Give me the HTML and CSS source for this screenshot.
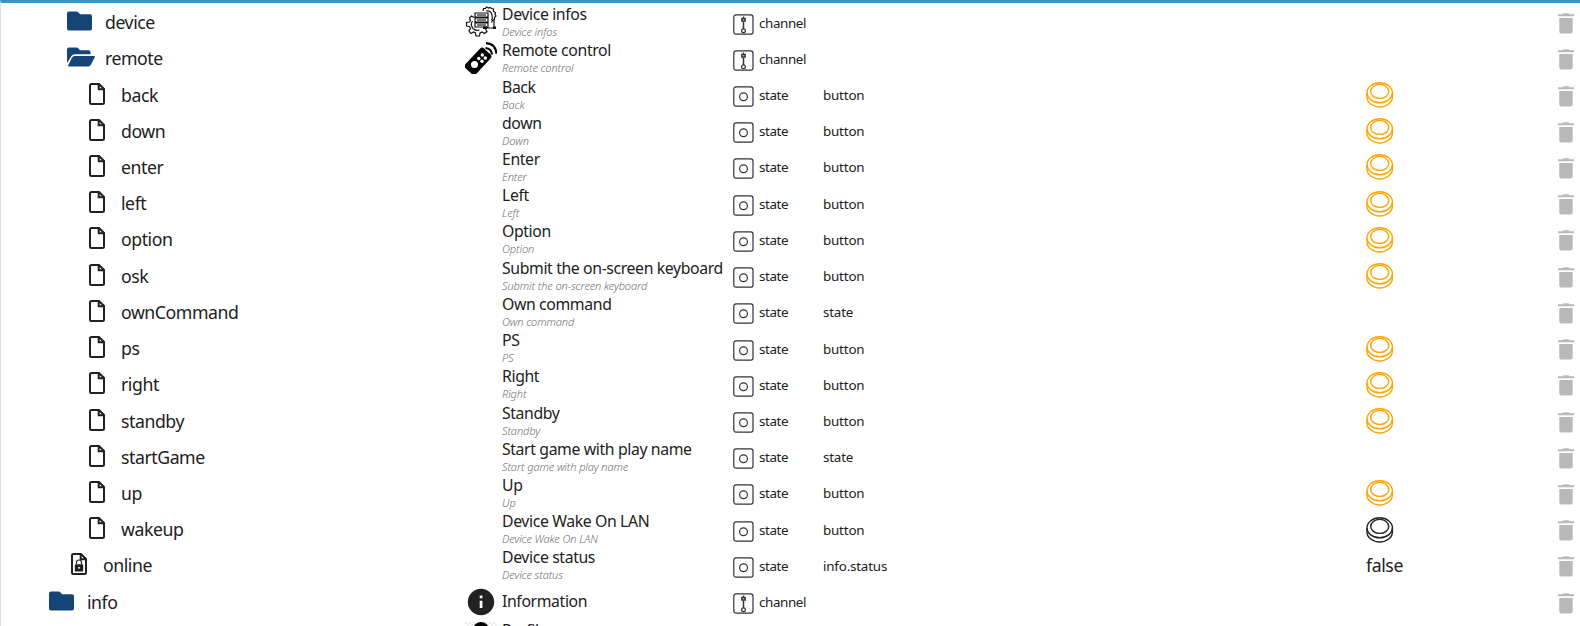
FILE: index.html
```html
<!DOCTYPE html>
<html lang="en">
<head>
<meta charset="utf-8">
<title>Objects</title>
<link rel="stylesheet" href="styles.css">
</head>
<body>
<svg class="defs" aria-hidden="true">
  <symbol id="folder" viewBox="0 0 28 20"><path d="M2 .5h7.5q1 0 1.700.7L12.700 2.700q.5.500 1.300.500h9q2 0 2 2V17.500q0 2-2 2H2q-2 0-2-2v-15q0-2 2-2z"/></symbol>
  <symbol id="open" viewBox="0 0 28 20"><path d="M0 16V2.500Q0 .5 2 .5h7.500q1 0 1.700.7l1.500 1.500q.5.500 1.300.500h7.500q2 0 2 2v2H7.500q-2 0-3 1.700z"/><path d="M7.500 9H27q1.400 0 .8 1.300L24 17.500q-1 2-2.800 2H2q-1.400 0-.8-1.300L5 10.500Q5.800 9 7.500 9z"/></symbol>
  <symbol id="file" viewBox="0 0 18 24"><path d="M3 2h8l5 5v13.500q0 1.500-1.500 1.500h-11Q2 22 2 20.500v-17Q2 2 3.500 2M10.700 2v5.300H16" fill="none" stroke="currentColor" stroke-width="2"/></symbol>
  <symbol id="lock" viewBox="0 0 18 24"><use href="#file"/><path d="M6.500 12v-1.500a2.500 2.500 0 0 1 5 0V12" fill="none" stroke="currentColor" stroke-width="1.200"/><path fill-rule="evenodd" d="M5.500 12.200h7q.7 0 .7.700v6q0 .7-.7.700h-7q-.7 0-.7-.7v-6q0-.7.7-.7zM9 14.900a.9.900 0 1 0 .01 0z"/></symbol>
  <symbol id="channel" viewBox="0 0 21 21"><g fill="none" stroke="currentColor" stroke-width="1.200"><rect x=".8" y=".8" width="19.200" height="19.400" rx="2.200"/><circle cx="10.500" cy="16.800" r="1.900"/><path d="M10.500 2.500v2M10.500 7.500v7.500" stroke-width="1.500"/><rect x="8.900" y="4.600" width="3.200" height="2.400" stroke-width="1.500"/></g></symbol>
  <symbol id="state" viewBox="0 0 21 21"><g fill="none" stroke="currentColor" stroke-width="1.200"><rect x=".8" y=".8" width="19.200" height="19.400" rx="2.200"/><circle cx="10.500" cy="10.700" r="3.900"/></g></symbol>
  <symbol id="press" viewBox="0 0 28 26"><g fill="none" stroke="currentColor" stroke-width="1.400"><ellipse cx="13.700" cy="10.800" rx="12.700" ry="10"/><ellipse cx="13.700" cy="9.400" rx="9" ry="7"/><path d="M1 11v4c0 5.500 5.700 10 12.700 10s12.700-4.500 12.700-10v-4"/></g></symbol>
  <symbol id="trash" viewBox="0 0 16 21"><path d="M0 1.300h4.500L5.500.3h5l1 1H16v2H0zM1.300 5h13.400v13.500q0 2-2 2H3.300q-2 0-2-2z"/></symbol>
  <symbol id="info" viewBox="0 0 32 32"><circle cx="16" cy="16" r="13.200"/><path d="M14.700 14.700h2.700v7.300h-2.700zM14.700 9.500h2.700v2.700h-2.700z" fill="#fff"/></symbol>
  <symbol id="gears" viewBox="0 0 32 32"><g fill="none" stroke="#111" stroke-width="1.200"><path d="M9 11.500 6.500 10 4.500 12l1 2.500-1 1.500-3 .5v3.500l3 .5 1 2-1.500 2.500 2 2.500 2.500-1.500 2 1 .5 3h3.500l.5-3 2-1 2.500 1.500 2.500-2-1.500-2.500M7.500 15a6 6 0 0 0 7 9M18 5l.5-2.500h2l1-1.500 2 1 1.500-.5 1.500 1 2 .5v2.500l2 1-.5 2 1 1.500-1.500 1.500v2l-2 1-1 2"/><path d="M21 5q5-1 6 4t-1 5M10 7h13v4H10zM10 12h13v4H10zM10 17h13v4H10zM20 22h9V13"/></g><g fill="#777"><path d="M12 8h9v2h-9zM12 13h9v2h-9zM12 18h9v2h-9z"/></g><path d="M18 20.500h4v2.500h-4zM28 20.500h3v2.500h-3z" fill="#111"/></symbol>
  <symbol id="remote" viewBox="0 0 32 32"><rect x="5.500" y="5.500" width="14.500" height="27" rx="3" transform="rotate(43 12.500 19.500)" fill="#000"/><g fill="#fff"><circle cx="9.500" cy="22.500" r="3.500"/><circle cx="13.800" cy="16.500" r="1.700"/><circle cx="17.300" cy="13" r="1.700"/><circle cx="17" cy="19.300" r="1.700"/><circle cx="20.300" cy="16" r="1.700"/></g><path d="M20.500 6q6 .5 6.500 6.500M21 1.200q9.500.5 10.500 10.500" fill="none" stroke="#000" stroke-width="2.200"/></symbol>
  <symbol id="person" viewBox="0 0 32 32"><path d="M0 .5h32M2 2.500h32" stroke="#e8e8e8" stroke-width="2" stroke-dasharray="2 2"/><circle cx="16" cy="8" r="8" fill="#000"/><path d="M3 30q0-12 13-12t13 12z" fill="#000"/></symbol>
</svg>
<main class="tree" id="tree"></main>
<script src="tree.js"></script>
</body>
</html>
```
FILE: styles.css
```css
body {
  margin: 0;
  height: 626px;
  overflow: hidden;
  background: #fff;
  color: #212121;
  font-family: "Noto Sans", "Open Sans", sans-serif;
}
.defs { display: none; }
svg { fill: currentColor; flex: none; display: block; }
.tree {
  box-sizing: border-box;
  height: 626px;
  overflow: hidden;
  border-top: 3px solid #3399cc;
  border-left: 1px solid #e0e0e0;
  padding-top: 1px;
}
.row {
  display: grid;
  grid-template-columns: 464px 268px 90px 543px 1fr 22px;
  height: 36.22px;
  align-items: center;
}
.id { display: flex; align-items: center; font-size: 17.7px; line-height: 24px; letter-spacing: -.45px; }
.level-1 { padding-left: 48px; }
.level-2 { padding-left: 66px; }
.level-3 { padding-left: 87px; }
.leaf-2 { padding-left: 69px; }
.id-text { padding-top: 0; }
.folder { width: 28px; height: 20px; color: #164477; margin: 0 10px 2px 0; }
.file { width: 18px; height: 24px; margin: 0 15px 2px 0; }
.name { display: flex; align-items: center; height: 36px; }
.avatar { width: 32px; height: 32px; margin-right: 5px; flex: none; }
.avatar svg { margin: 0; }
.title { font-size: 15.8px; line-height: 19px; letter-spacing: -.38px; white-space: nowrap; }
.desc { font-size: 11px; line-height: 15px; font-style: italic; font-weight: 300; color: #707070; letter-spacing: -.1px; white-space: nowrap; }
.type { display: flex; align-items: center; font-size: 13.4px; letter-spacing: -.4px; gap: 5px; }
.type-icon { width: 21px; height: 21px; margin-top: 4px; color: #333; }
.type span, .role { padding-top: 1px; }
.role { font-size: 13.4px; letter-spacing: -.2px; }
.value { font-size: 17.7px; letter-spacing: -.4px; }
.press { width: 28px; height: 26px; color: #ffa500; margin-top: 1px; }
.press-dark { color: #212121; }
.trash { width: 16px; height: 21px; color: #b9b9b9; margin-top: 3px; }
```
FILE: tree.js
```js
const rows = [
  [2, 'folder', 'device', 'gears', 'Device infos', 'Device infos', 'channel', '', ''],
  [2, 'open', 'remote', 'remote', 'Remote control', 'Remote control', 'channel', '', ''],
  [3, 'file', 'back', '', 'Back', 'Back', 'state', 'button', 'press'],
  [3, 'file', 'down', '', 'down', 'Down', 'state', 'button', 'press'],
  [3, 'file', 'enter', '', 'Enter', 'Enter', 'state', 'button', 'press'],
  [3, 'file', 'left', '', 'Left', 'Left', 'state', 'button', 'press'],
  [3, 'file', 'option', '', 'Option', 'Option', 'state', 'button', 'press'],
  [3, 'file', 'osk', '', 'Submit the on-screen keyboard', 'Submit the on-screen keyboard', 'state', 'button', 'press'],
  [3, 'file', 'ownCommand', '', 'Own command', 'Own command', 'state', 'state', ''],
  [3, 'file', 'ps', '', 'PS', 'PS', 'state', 'button', 'press'],
  [3, 'file', 'right', '', 'Right', 'Right', 'state', 'button', 'press'],
  [3, 'file', 'standby', '', 'Standby', 'Standby', 'state', 'button', 'press'],
  [3, 'file', 'startGame', '', 'Start game with play name', 'Start game with play name', 'state', 'state', ''],
  [3, 'file', 'up', '', 'Up', 'Up', 'state', 'button', 'press'],
  [3, 'file', 'wakeup', '', 'Device Wake On LAN', 'Device Wake On LAN', 'state', 'button', 'dark'],
  [2, 'lock', 'online', '', 'Device status', 'Device status', 'state', 'info.status', 'false'],
  [1, 'folder', 'info', 'info', 'Information', '', 'channel', '', ''],
  [1, '', '', 'person', 'Profil', 'Profil', '', '', '']
];

const icon = (name, cls) => name ? `<svg class="${cls}"><use href="#${name}"/></svg>` : '';

function value(v) {
  if (v === 'press') return icon('press', 'press');
  if (v === 'dark') return icon('press', 'press press-dark');
  return v;
}

document.getElementById('tree').innerHTML = rows.map(([level, kind, id, avatar, title, desc, type, role, val]) => {
  const isFolder = kind === 'folder' || kind === 'open';
  const indent = kind === 'lock' ? 'leaf-2' : 'level-' + level;
  return `<div class="row">
    <div class="id ${indent}">${icon(kind, isFolder ? 'folder' : 'file')}<span class="id-text">${id}</span></div>
    <div class="name"><div class="avatar">${icon(avatar, 'avatar')}</div><div><div class="title">${title}</div>${desc ? `<div class="desc">${desc}</div>` : ''}</div></div>
    <div class="type">${icon(type, 'type-icon')}<span>${type}</span></div>
    <div class="role">${role}</div>
    <div class="value">${value(val)}</div>
    ${type ? icon('trash', 'trash') : ''}
  </div>`;
}).join('');
```
